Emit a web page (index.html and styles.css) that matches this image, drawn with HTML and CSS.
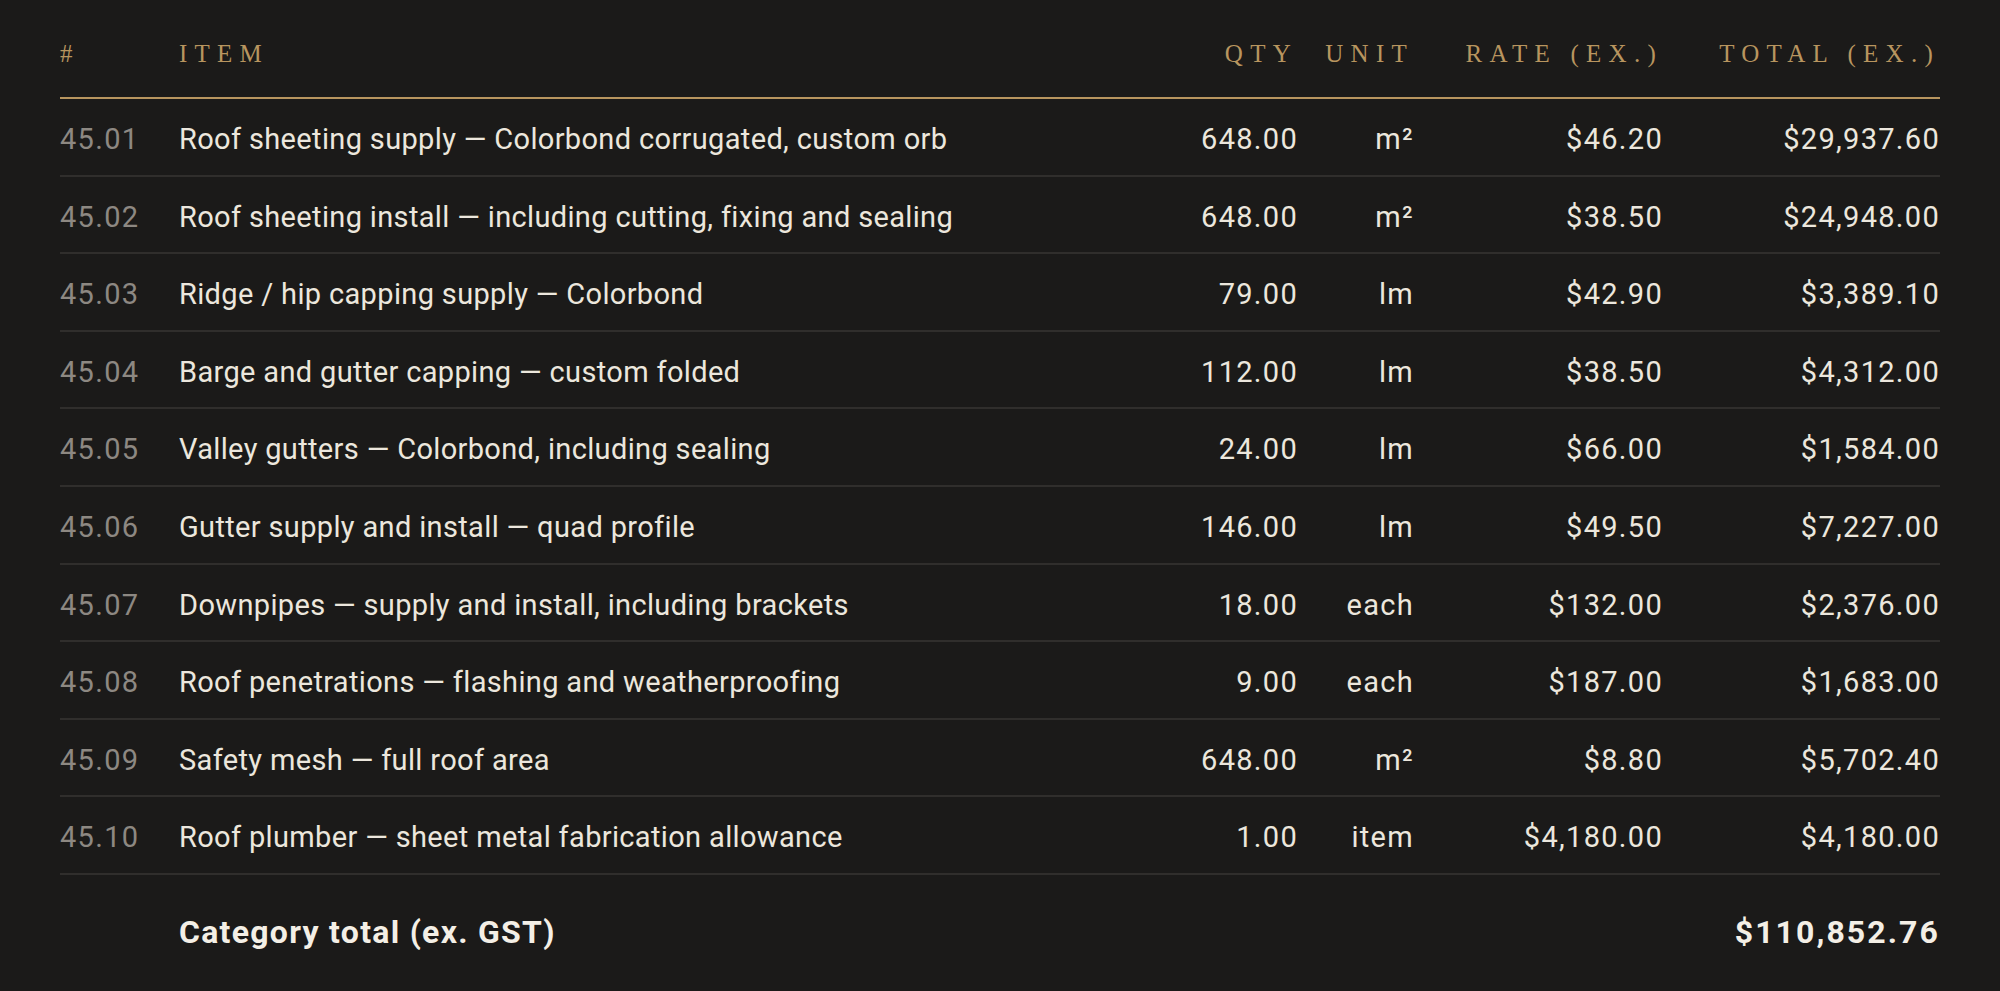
FILE: index.html
```html
<!DOCTYPE html>
<html lang="en">
<head>
    <meta charset="UTF-8">
    <meta name="viewport" content="width=device-width, initial-scale=1.0">
    <title>Roofing - Category 45</title>
    <link rel="stylesheet" href="styles.css">
</head>
<body>
    <table class="bq">
        <colgroup>
            <col class="c-code">
            <col class="c-item">
            <col class="c-qty">
            <col class="c-unit">
            <col class="c-rate">
            <col class="c-total">
        </colgroup>

        <!-- Column headings -->
        <thead>
            <tr>
                <th>#</th>
                <th>Item</th>
                <th class="num">Qty</th>
                <th class="num">Unit</th>
                <th class="num">Rate (ex.)</th>
                <th class="num">Total (ex.)</th>
            </tr>
        </thead>

        <!-- Line items -->
        <tbody>
            <tr>
                <td class="code">45.01</td>
                <td>Roof sheeting supply — Colorbond corrugated, custom orb</td>
                <td class="num">648.00</td>
                <td class="num">m²</td>
                <td class="num">$46.20</td>
                <td class="num">$29,937.60</td>
            </tr>
            <tr>
                <td class="code">45.02</td>
                <td>Roof sheeting install — including cutting, fixing and sealing</td>
                <td class="num">648.00</td>
                <td class="num">m²</td>
                <td class="num">$38.50</td>
                <td class="num">$24,948.00</td>
            </tr>
            <tr>
                <td class="code">45.03</td>
                <td>Ridge / hip capping supply — Colorbond</td>
                <td class="num">79.00</td>
                <td class="num">lm</td>
                <td class="num">$42.90</td>
                <td class="num">$3,389.10</td>
            </tr>
            <tr>
                <td class="code">45.04</td>
                <td>Barge and gutter capping — custom folded</td>
                <td class="num">112.00</td>
                <td class="num">lm</td>
                <td class="num">$38.50</td>
                <td class="num">$4,312.00</td>
            </tr>
            <tr>
                <td class="code">45.05</td>
                <td>Valley gutters — Colorbond, including sealing</td>
                <td class="num">24.00</td>
                <td class="num">lm</td>
                <td class="num">$66.00</td>
                <td class="num">$1,584.00</td>
            </tr>
            <tr>
                <td class="code">45.06</td>
                <td>Gutter supply and install — quad profile</td>
                <td class="num">146.00</td>
                <td class="num">lm</td>
                <td class="num">$49.50</td>
                <td class="num">$7,227.00</td>
            </tr>
            <tr>
                <td class="code">45.07</td>
                <td>Downpipes — supply and install, including brackets</td>
                <td class="num">18.00</td>
                <td class="num">each</td>
                <td class="num">$132.00</td>
                <td class="num">$2,376.00</td>
            </tr>
            <tr>
                <td class="code">45.08</td>
                <td>Roof penetrations — flashing and weatherproofing</td>
                <td class="num">9.00</td>
                <td class="num">each</td>
                <td class="num">$187.00</td>
                <td class="num">$1,683.00</td>
            </tr>
            <tr>
                <td class="code">45.09</td>
                <td>Safety mesh — full roof area</td>
                <td class="num">648.00</td>
                <td class="num">m²</td>
                <td class="num">$8.80</td>
                <td class="num">$5,702.40</td>
            </tr>
            <tr>
                <td class="code">45.10</td>
                <td>Roof plumber — sheet metal fabrication allowance</td>
                <td class="num">1.00</td>
                <td class="num">item</td>
                <td class="num">$4,180.00</td>
                <td class="num">$4,180.00</td>
            </tr>
        </tbody>

        <!-- Category total -->
        <tfoot>
            <tr>
                <td></td>
                <td colspan="4">Category total (ex. GST)</td>
                <td class="num">$110,852.76</td>
            </tr>
        </tfoot>
    </table>
</body>
</html>
```

FILE: styles.css
```css
body {
    margin: 0;
    padding: 30px 60px 0;
    background: #1b1a19;
    color: #ece7dd;
    font-family: Roboto, "Liberation Sans", sans-serif;
}

.bq {
    width: 100%;
    border-collapse: collapse;
    table-layout: fixed;
}

.c-code { width: 119px; }
.c-qty { width: 160px; }
.c-unit { width: 116px; }
.c-rate { width: 249px; }
.c-total { width: 277px; }

th,
td {
    padding: 0;
    text-align: left;
    white-space: nowrap;
}

.num {
    text-align: right;
}

thead th {
    font-family: "Liberation Serif", serif;
    font-weight: normal;
    font-size: 25px;
    line-height: 48px;
    letter-spacing: 0.29em;
    text-transform: uppercase;
    color: #b8955f;
    padding-bottom: 19px;
    border-bottom: 2px solid #b8955f;
}

tbody td {
    font-size: 29px;
    line-height: 39.6px;
    padding: 21px 0 15px;
    letter-spacing: 0.012em;
    border-bottom: 2px solid #302e2c;
}

tbody td.code,
tbody td.num {
    letter-spacing: 0.045em;
}

tbody td.code {
    color: #8d8882;
}

tfoot td {
    font-size: 32px;
    font-weight: bold;
    line-height: 40px;
    padding: 37px 0 39px;
    letter-spacing: 0.04em;
    color: #f4efe6;
}

tfoot td.num {
    letter-spacing: 0.065em;
}
```
